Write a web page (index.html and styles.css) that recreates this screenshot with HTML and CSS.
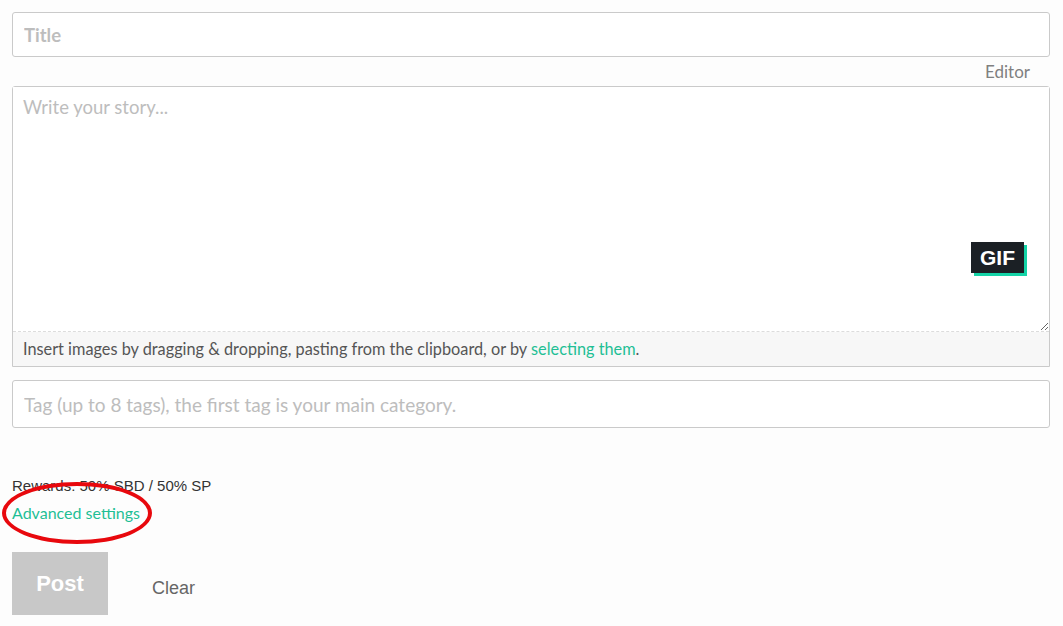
FILE: index.html
```html
<!DOCTYPE html>
<html lang="en">
<head>
<meta charset="UTF-8">
<title>Submit a story</title>
<link rel="stylesheet" href="styles.css">
</head>
<body>

<form class="story-form">
  <input class="field title-field" type="text" placeholder="Title">

  <div class="editor-label">Editor</div>

  <div class="editor">
    <div class="editor-body">
      <textarea class="story-text" placeholder="Write your story..."></textarea>
      <span class="gif-badge">GIF</span>
    </div>
    <div class="dropzone">
      Insert images by dragging &amp; dropping, pasting from the clipboard, or by <a href="#" class="link">selecting them</a>.
    </div>
  </div>

  <input class="field tag-field" type="text" placeholder="Tag (up to 8 tags), the first tag is your main category.">

  <div class="rewards">Rewards: 50% SBD / 50% SP</div>
  <div class="advanced">
    <a href="#" class="link">Advanced settings</a>
    <span class="mark"></span>
  </div>

  <div class="actions">
    <button type="button" class="post-button" disabled>Post</button>
    <button type="button" class="clear-button">Clear</button>
  </div>
</form>

</body>
</html>
```

FILE: styles.css
```css
body {
  margin: 0;
  background-color: #fdfdfd;
  font-family: "Source Sans Pro", Lato, "Open Sans", sans-serif;
  color: #333;
}
.story-form {
  padding: 12px 13px 0 12px;
}
.field {
  display: block;
  box-sizing: border-box;
  width: 100%;
  border: 1px solid #cacaca;
  border-radius: 3px;
  background-color: #fff;
  font-family: inherit;
  font-size: 18.5px;
  padding: 0 11px;
  outline: none;
}
.field::placeholder {
  color: #bdbdbd;
}
.title-field {
  height: 45px;
  font-weight: bold;
}
.tag-field {
  height: 48px;
  margin-top: 13px;
  font-size: 19px;
}
.editor-label {
  text-align: right;
  padding-right: 20px;
  font-size: 17px;
  color: #808080;
  height: 29px;
  line-height: 29px;
}
.editor {
  border: 1px solid #cacaca;
  border-radius: 3px 3px 0 0;
}
.editor-body {
  position: relative;
}
.story-text {
  display: block;
  box-sizing: border-box;
  width: 100%;
  height: 245px;
  border: none;
  border-bottom: 1px dashed #dcdcdc;
  background-color: #fff;
  font-family: inherit;
  font-size: 18.5px;
  padding: 9px 10px;
  resize: vertical;
  outline: none;
}
.story-text::placeholder {
  color: #bdbdbd;
}
.gif-badge {
  position: absolute;
  top: 155px;
  right: 25px;
  background-color: #1b2025;
  color: #fff;
  font-family: "Liberation Sans", Arial, sans-serif;
  font-weight: bold;
  font-size: 21px;
  line-height: 31px;
  padding: 0 9px;
  box-shadow: 3px 3px 0 #14d3a6;
}
.dropzone {
  background-color: #f7f7f7;
  font-size: 16.3px;
  color: #555;
  padding: 0 10px;
  height: 34px;
  line-height: 34px;
}
.link {
  color: #1fbf95;
  text-decoration: none;
}
.rewards {
  margin-top: 48px;
  font-family: "Liberation Sans", Arial, sans-serif;
  font-size: 15px;
  color: #333;
  line-height: 20px;
}
.advanced {
  position: relative;
  font-size: 16px;
  line-height: 34px;
}
.mark {
  position: absolute;
  left: -10px;
  top: -14px;
  width: 142px;
  height: 54px;
  border: 4px solid #e8080d;
  border-radius: 50%;
  pointer-events: none;
}
.actions {
  display: flex;
  align-items: center;
  margin-top: 22px;
}
.post-button {
  width: 96px;
  height: 63px;
  border: none;
  background-color: #c8c8c8;
  color: #fff;
  font-family: "Liberation Sans", Arial, sans-serif;
  font-weight: bold;
  font-size: 22px;
}
.clear-button {
  margin-left: 38px;
  margin-top: 9px;
  border: none;
  background: none;
  color: #666;
  font-family: "Liberation Sans", Arial, sans-serif;
  font-size: 18px;
  padding: 0 6px;
}
```
